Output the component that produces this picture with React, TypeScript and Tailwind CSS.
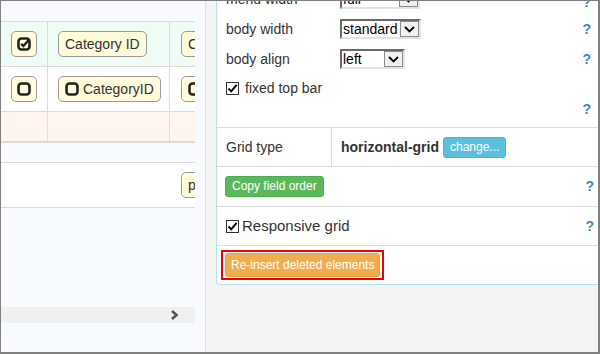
import React from 'react';

const font = { fontFamily: '"Liberation Sans", Arial, sans-serif' };

function CheckSquareIcon({ checked }: { checked: boolean }) {
  return (
    <svg width="14" height="14" viewBox="0 0 14 14" className="shrink-0">
      <rect x="1.5" y="1.5" width="11" height="11" rx="3" fill="none" stroke="#222" strokeWidth="2.6" />
      {checked && <path d="M4.2 6.8 L6.4 9 L11.5 3.2" fill="none" stroke="#222" strokeWidth="2.4" />}
    </svg>
  );
}

function Badge({ children }: { children: React.ReactNode }) {
  return (
    <div className="flex h-[26px] shrink-0 items-center gap-[4px] rounded-[5px] border border-[#9a9a9a] bg-[#fffbdb] px-[6px] text-[14px] text-[#333] whitespace-nowrap">
      {children}
    </div>
  );
}

function FakeSelect({ value, width }: { value: string; width: number }) {
  return (
    <div
      className="flex h-[20px] items-stretch border-2 border-t-[#6a6a6a] border-l-[#6a6a6a] border-b-[#e3e3e3] border-r-[#e3e3e3] bg-white"
      style={{ width }}
    >
      <div className="flex-1 pl-[1px] text-[14px] leading-[16px] text-black">{value}</div>
      <div className="flex w-[19px] items-center justify-center border border-[#8a8a8a] bg-[#f0f0f0]">
        <svg width="11" height="7" viewBox="0 0 11 7">
          <path d="M1 1 L5.5 5.5 L10 1" fill="none" stroke="#000" strokeWidth="1.8" />
        </svg>
      </div>
    </div>
  );
}

function FakeCheckbox() {
  return (
    <div className="flex h-[13px] w-[13px] shrink-0 items-center justify-center border border-[#333] bg-white">
      <svg width="11" height="11" viewBox="0 0 11 11">
        <path d="M1.5 5.5 L4.2 8.3 L9.6 1.8" fill="none" stroke="#000" strokeWidth="1.9" />
      </svg>
    </div>
  );
}

function Help({ className = '' }: { className?: string }) {
  return <span className={`text-[14px] font-bold text-[#3b87c4] ${className}`}>?</span>;
}

export default function App() {
  return (
    <div
      className="box-border flex h-[354px] w-[600px] overflow-hidden border-t border-l border-r-2 border-b-2 border-[#808080]"
      style={font}
    >
      {/* left grid preview */}
      <div className="flex w-[205px] shrink-0 border-r border-[#e2e2e2] bg-[#f7fbfe]">
        <div className="flex w-[194px] flex-col overflow-hidden">
          <div className="h-[20px] shrink-0" />
          <div className="flex h-[45px] shrink-0 border-t border-[#dcdcdc] bg-[#effcf5]">
            <div className="flex w-[47px] shrink-0 items-center justify-center border-r border-[#dcdcdc]">
              <div className="flex h-[26px] w-[26px] items-center justify-center rounded-[5px] border border-[#9a9a9a] bg-[#fffbdb]">
                <CheckSquareIcon checked />
              </div>
            </div>
            <div className="flex w-[122px] shrink-0 items-center border-r border-[#dcdcdc] pl-[10px]">
              <Badge>Category ID</Badge>
            </div>
            <div className="flex items-center pl-[11px]">
              <Badge>Category</Badge>
            </div>
          </div>
          <div className="flex h-[45px] shrink-0 border-t border-[#dcdcdc] bg-white">
            <div className="flex w-[47px] shrink-0 items-center justify-center border-r border-[#dcdcdc]">
              <div className="flex h-[26px] w-[26px] items-center justify-center rounded-[5px] border border-[#9a9a9a] bg-[#fffbdb]">
                <CheckSquareIcon checked={false} />
              </div>
            </div>
            <div className="flex w-[122px] shrink-0 items-center border-r border-[#dcdcdc] pl-[10px]">
              <Badge>
                <CheckSquareIcon checked={false} />
                CategoryID
              </Badge>
            </div>
            <div className="flex items-center pl-[11px]">
              <Badge>
                <CheckSquareIcon checked={false} />
                CategoryName
              </Badge>
            </div>
          </div>
          <div className="flex h-[32px] shrink-0 border-t border-b-2 border-t-[#dcdcdc] border-b-[#dadada] bg-[#fff4ee]">
            <div className="w-[47px] shrink-0 border-r border-[#e4dcd8]" />
            <div className="w-[122px] shrink-0 border-r border-[#e4dcd8]" />
          </div>
          <div className="h-[19px] shrink-0" />
          <div className="flex h-[46px] shrink-0 items-center overflow-hidden border-t border-b border-[#dcdcdc] bg-white pl-[180px]">
            <Badge>page</Badge>
          </div>
          <div className="flex-1" />
          <div className="flex h-[16px] shrink-0 items-center justify-end bg-[#f0f0f0] pr-[16px]">
            <svg width="9" height="10" viewBox="0 0 9 10">
              <path d="M2 1 L6.5 5 L2 9" fill="none" stroke="#555" strokeWidth="2.6" />
            </svg>
          </div>
          <div className="h-[29px] shrink-0" />
        </div>
      </div>

      {/* right settings */}
      <div className="flex-1 bg-[#f4f4f4] pl-[10px]">
        <div className="overflow-hidden rounded-bl-[4px] border-l border-b border-[#b5e3eb] bg-white text-[14px] text-[#333]">
          <div className="-mt-[17px] border-b border-[#dddddd] pb-[11px] pl-[9px] pr-[7px]">
            <div className="flex h-[30px] items-center">
              <span className="w-[114px]">menu width</span>
              <FakeSelect value="full" width={80} />
              <Help className="ml-auto mt-[6px]" />
            </div>
            <div className="flex h-[30px] items-center">
              <span className="w-[114px]">body width</span>
              <FakeSelect value="standard" width={81} />
              <Help className="ml-auto" />
            </div>
            <div className="flex h-[30px] items-center">
              <span className="w-[114px]">body align</span>
              <FakeSelect value="left" width={65} />
              <Help className="ml-auto" />
            </div>
            <div className="flex h-[28px] items-center gap-[6px]">
              <FakeCheckbox />
              <span>fixed top bar</span>
            </div>
            <div className="flex h-[14px] items-center justify-end">
              <Help />
            </div>
          </div>

          <div className="flex h-[39px] items-center border-b border-[#dddddd]">
            <div className="flex h-full w-[115px] items-center border-r border-[#dddddd] pl-[9px]">Grid type</div>
            <div className="flex items-center pl-[9px]">
              <span className="font-bold">horizontal-grid</span>
              <button className="ml-[4px] rounded-[3px] border border-[#46b8da] bg-[#5bc0de] px-[6px] py-[1px] text-[12px] leading-[17px] text-white">
                change...
              </button>
            </div>
          </div>

          <div className="flex h-[40px] items-center border-b border-[#dddddd] pl-[8px] pr-[4px]">
            <button className="rounded-[3px] border border-[#4cae4c] bg-[#5cb85c] px-[6px] py-[1px] text-[12px] leading-[17px] text-white">
              Copy field order
            </button>
            <Help className="ml-auto" />
          </div>

          <div className="flex h-[39px] items-center border-b border-[#dddddd] pl-[9px] pr-[4px]">
            <FakeCheckbox />
            <span className="ml-[3px] text-[15px]">Responsive grid</span>
            <Help className="ml-auto" />
          </div>

          <div className="flex h-[38px] items-center pl-[4px]">
            <div className="border-2 border-[#e8000b] px-[2px] py-[1px]">
              <button className="rounded-[3px] border border-[#eea236] bg-[#f0ad4e] px-[5px] py-[2px] text-[12px] leading-[18px] text-white">
                Re-insert deleted elements
              </button>
            </div>
          </div>
        </div>
      </div>
    </div>
  );
}
